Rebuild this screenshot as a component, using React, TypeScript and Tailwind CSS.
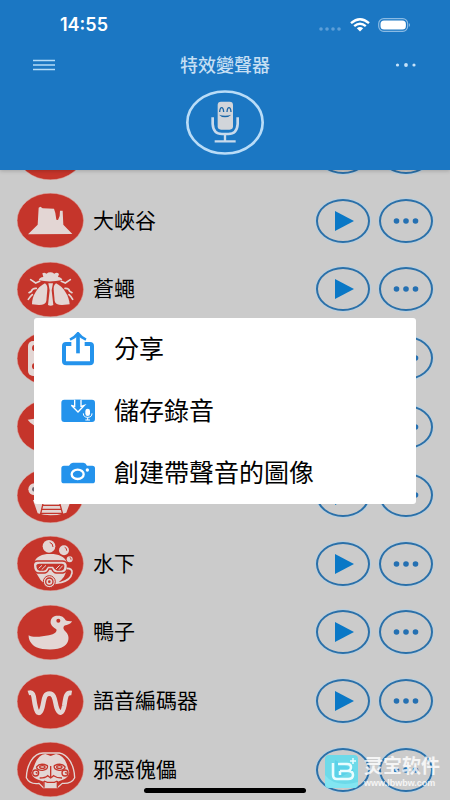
import type { ReactNode } from "react";

const PALE = "#e3d6d4";
const RED = "#c5352b";

function Badge({ children }: { children?: ReactNode }) {
  return (
    <svg viewBox="0 0 201 165" className="h-[55px] w-[67px] shrink-0" aria-hidden="true">
      <ellipse cx="100" cy="82.5" rx="99.500" ry="82" fill={RED} stroke="#dda8a2" strokeWidth="1.5" />
      {children}
    </svg>
  );
}

const canyon = (
  <path
    fill={PALE}
    d="M33 124L62 95L65 44L70 41L77 46L111 47L115 60L118 80L123 81L128 69L129 53L137 53L139 95L166 123Z"
  />
);

const fly = (
  <g fill={PALE} stroke={PALE} strokeLinecap="round">
    <path d="M76 34Q82 30 88 35Q100 27 112 35Q120 29 126 36L123 45Q134 46 136 54Q100 62 65 55Q67 46 79 45Z" stroke="none" />
    <path d="M84 64Q92 70 91 82L88 117Q86 129 66 129L45 127C44 105 60 75 84 64Z" stroke="none" />
    <path d="M117 64Q109 70 110 82L113 117Q115 129 135 129L158 127C157 105 141 75 117 64Z" stroke="none" />
    <path d="M94 64H108L104 85L109 129Q101 134 93 129L98 85Z" stroke="none" />
    <g fill="none" strokeWidth="5">
      <path d="M68 58L56 63L41 53" />
      <path d="M133 58L145 63L160 53" />
      <path d="M58 79Q46 78 43 88L36 92" />
      <path d="M144 79Q156 78 158 88L165 92" />
      <path d="M46 98Q39 104 34 112" />
      <path d="M156 98Q163 104 167 112" />
    </g>
  </g>
);

const domino = (
  <g>
    <rect x="33" y="30" width="134" height="105" rx="15" fill={PALE} />
    <circle cx="55" cy="51" r="10" fill={RED} />
    <circle cx="55" cy="106" r="10" fill={RED} />
  </g>
);

const plane = <path fill={PALE} d="M32 62L52 59L80 75V92L58 84L40 71Z" />;

const robot = (
  <g>
    <circle cx="52" cy="64" r="18" fill={PALE} />
    <circle cx="52" cy="64" r="7" fill="#6f6670" />
    <path d="M48 96L162 96L148 134Q102 149 62 136Z" fill={PALE} />
    <g fill="none" stroke={RED} strokeWidth="4">
      <path d="M76 112H130M73 124H134M70 136H138" />
      <path d="M80 98L70 142M126 98L138 142" />
    </g>
  </g>
);

const diver = (
  <g>
    <g fill={PALE}>
      <circle cx="96" cy="31" r="19" />
      <circle cx="141" cy="43" r="15" />
      <circle cx="158" cy="70" r="9" />
      <path d="M53 76C58 61 78 53 101 54C124 54 143 62 148 76L151 100L141 122Q123 147 98 148Q76 145 65 123L56 108Z" />
    </g>
    <g fill="none" stroke={RED} strokeWidth="3">
      <path d="M98 19Q108 22 108 33M143 34Q150 36 149 44M158 64Q163 66 162 71" />
    </g>
    <path d="M49 87Q49 75 62 75H136Q149 75 151 87Q153 108 138 111H118Q109 111 104 99H96Q91 111 82 111H62Q49 108 49 87Z" fill={PALE} stroke={RED} strokeWidth="4" />
    <path d="M58 88Q59 83 67 83H134Q143 83 142 91Q142 104 132 104H120Q113 102 108 92H93Q87 103 80 104H67Q58 102 58 88Z" fill={RED} />
    <path d="M65 97L75 88M74 101L87 88M117 99L128 88M126 101L137 89" stroke={PALE} strokeWidth="3" />
    <path d="M149 97Q167 97 165 111Q161 132 133 139L108 143" fill="none" stroke={PALE} strokeWidth="5" />
    <circle cx="97" cy="137" r="18" fill={PALE} stroke={RED} strokeWidth="3" />
    <circle cx="97" cy="137" r="11" fill="none" stroke={RED} strokeWidth="4" />
    <circle cx="97" cy="137" r="4" fill={RED} />
  </g>
);

const duck = (
  <g>
    <path
      fill={PALE}
      d="M35 91C45 98 72 96 96 91C113 88 121 80 118 73C109 67 99 60 101 48C103 36 113 31 124 32C136 32 143 39 146 46C152 50 160 48 165 49C163 56 152 60 142 62C137 67 139 74 147 81C158 92 158 112 141 124C122 137 80 136 58 127C43 119 34 105 35 91Z"
    />
    <circle cx="124" cy="47" r="6" fill={RED} />
  </g>
);

const wave = (
  <path
    d="M34 57C54 50 49 76 55 96C60 122 70 123 76 100C82 78 80 59 97 59C114 59 113 80 119 101C127 123 137 120 142 94C146 70 146 54 164 57"
    fill="none"
    stroke={PALE}
    strokeWidth="14"
    strokeLinecap="butt"
  />
);

const puppet = (
  <g>
    <path d="M28 107C29 68 50 33 78 33H127C153 37 172 70 173 107Q164 126 136 124L121 137H79L66 124Q38 128 28 107Z" fill={RED} stroke={PALE} strokeWidth="4" />
    <path d="M54 65Q65 38 85 36L101 42L117 36Q139 39 149 65L157 91Q155 105 141 112L122 119V136H80V119L60 112Q43 105 44 91Z" fill={PALE} />
    <g fill="none" stroke={RED} strokeWidth="4">
      <path d="M58 75Q70 61 91 71Q94 83 77 85Q62 86 58 75" />
      <path d="M145 75Q133 61 112 71Q109 83 126 85Q141 86 145 75" />
      <ellipse cx="76" cy="75" rx="8" ry="4" />
      <ellipse cx="127" cy="75" rx="8" ry="4" />
      <circle cx="56" cy="93" r="9" />
      <circle cx="144" cy="93" r="9" />
      <path d="M56 93q4-3 4 2M144 93q4-3 4 2" />
      <path d="M101 72V107M68 108Q85 108 92 101L101 108L110 101Q119 108 135 108M81 117V137M121 117V137M81 117L91 121H112L121 117" />
    </g>
  </g>
);

const rows: { label: string; art?: ReactNode }[] = [
  { label: "" },
  { label: "大峽谷", art: canyon },
  { label: "蒼蠅", art: fly },
  { label: "", art: domino },
  { label: "", art: plane },
  { label: "", art: robot },
  { label: "水下", art: diver },
  { label: "鴨子", art: duck },
  { label: "語音編碼器", art: wave },
  { label: "邪惡傀儡", art: puppet },
];

const roundButton =
  "flex h-11 w-[54px] shrink-0 items-center justify-center rounded-[50%] border-2 border-[#2a70a9] text-[#0a78c6] ring-1 ring-[#b5cfe2]";

function EffectRow({ label, art }: { label: string; art?: ReactNode }) {
  return (
    <li className="flex items-center pr-[17px] pl-[17px]">
      <Badge>{art}</Badge>
      <span className="ml-[9px] flex-1 pb-1 text-[21px] leading-7 text-black">{label}</span>
      <div className="flex gap-[9px]">
        <button type="button" className={roundButton}>
          <svg viewBox="0 0 22 22" className="h-[22px] w-[22px]" fill="currentColor" aria-hidden="true">
            <path d="M3 1L22 11L3 21Z" />
          </svg>
        </button>
        <button type="button" className={roundButton}>
          <svg viewBox="0 0 26 8" className="h-2 w-[26px]" fill="#2470b2" aria-hidden="true">
            <circle cx="3.500" cy="4" r="2.800" />
            <circle cx="13" cy="4" r="2.800" />
            <circle cx="22.500" cy="4" r="2.800" />
          </svg>
        </button>
      </div>
    </li>
  );
}

function Header() {
  return (
    <header className="relative z-10 shrink-0 bg-[#1b77c3] pb-[15px] shadow-[0_1px_4px_rgba(0,0,0,0.2)]">
      <div className="flex h-[50px] items-center justify-between pr-[39px] pl-[60px] text-white">
        <time className="font-[Inter,sans-serif] text-[18px] leading-6 font-semibold">14:55</time>
        <div className="flex items-center gap-2">
          <svg viewBox="0 0 24 14" className="h-[14px] w-6" fill="#5d9fd8" aria-hidden="true">
            <circle cx="3" cy="11" r="1.800" />
            <circle cx="9" cy="11" r="1.800" />
            <circle cx="15" cy="11" r="1.800" />
            <circle cx="21" cy="11" r="1.800" />
          </svg>
          <svg viewBox="0 0 20 14" className="h-[14px] w-5" fill="none" stroke="#fff" strokeWidth="2.400" aria-hidden="true">
            <path d="M1 5.200Q10-2.600 19 5.200" />
            <path d="M4.200 8.200Q10 3.200 15.800 8.200" />
            <path d="M6.800 10.300Q10 7.700 13.200 10.300L10 13.500Z" fill="#fff" stroke="none" />
          </svg>
          <svg viewBox="0 0 33 14" className="h-[14px] w-[33px]" aria-hidden="true">
            <rect x="0.700" y="0.700" width="29" height="12.600" rx="5" fill="none" stroke="#8bbbe4" strokeWidth="1.200" />
            <rect x="2.500" y="2.500" width="25.400" height="9" rx="3.500" fill="#fff" />
            <path d="M31 5Q33 7 31 9Z" fill="#8bbbe4" />
          </svg>
        </div>
      </div>
      <div className="flex h-[30px] items-center justify-between px-8">
        <button type="button" aria-label="Menu" className="flex h-6 w-6 items-center justify-center">
          <svg viewBox="0 0 24 12" className="h-3 w-6" stroke="#b4dcf8" strokeWidth="1.400" aria-hidden="true">
            <path d="M1 1.500H23M1 6H23M1 10.500H23" />
          </svg>
        </button>
        <h1 className="pb-[2px] text-[18px] leading-6 font-medium text-[#c6dff3]">特效變聲器</h1>
        <button type="button" aria-label="More" className="flex h-6 w-6 items-center justify-center">
          <svg viewBox="0 0 24 6" className="h-[6px] w-6" fill="#c6e2f8" aria-hidden="true">
            <circle cx="3.500" cy="3" r="1.600" />
            <circle cx="12" cy="3" r="1.900" />
            <circle cx="20" cy="3" r="1.600" />
          </svg>
        </button>
      </div>
      <div className="mt-[10px] flex justify-center">
        <button type="button" aria-label="Record" className="h-[65px] w-[78px]">
          <svg viewBox="558 270 234 195" className="h-full w-full" aria-hidden="true">
            <ellipse cx="675" cy="367.500" rx="113" ry="93" fill="none" stroke="#b9dcf7" strokeWidth="8" />
            <rect x="653" y="305" width="46" height="84" rx="10" fill="#d2d5da" />
            <path d="M659 336Q660 323 665 323Q670 323 671 336M681 336Q682 323 687 323Q692 323 693 336" fill="none" stroke="#1b67a8" strokeWidth="4" />
            <path d="M657 344Q675 350 694 344Q686 352 675 352Q664 352 657 344Z" fill="#1b67a8" />
            <path d="M638 352V372Q640 402 666 402H685Q711 402 713 372V352" fill="none" stroke="#c8daec" strokeWidth="8" />
            <path d="M675 402V423M644 424H707" fill="none" stroke="#c8daec" strokeWidth="7" />
          </svg>
        </button>
      </div>
    </header>
  );
}

const actions: { label: string; icon: ReactNode }[] = [
  {
    label: "分享",
    icon: (
      <svg viewBox="182 66 102 102" className="h-[34px] w-[34px]" fill="none" stroke="#2493ec" aria-hidden="true">
        <path d="M213 102H197Q191 102 191 108V153Q191 160 198 160H268Q275 160 275 153V108Q275 102 269 102H253" strokeWidth="12" />
        <path d="M233 130V74" strokeWidth="11" />
        <path d="M209 89Q224 82 233 70Q242 82 257 89" strokeWidth="8" />
      </svg>
    ),
  },
  {
    label: "儲存錄音",
    icon: (
      <svg viewBox="182 252 102 102" className="h-[34px] w-[34px]" aria-hidden="true">
        <rect x="183" y="269" width="101" height="67" rx="9" fill="#2493ec" />
        <path d="M223 269V289L213 286L233 306L252 286L242 289V269" fill="#2493ec" stroke="#fff" strokeWidth="4" />
        <rect x="255" y="296" width="14" height="22" rx="7" fill="#fff" />
        <path d="M249 310Q249 322 262 322Q275 322 275 310M262 322V330M255 330H269" fill="none" stroke="#fff" strokeWidth="3" />
      </svg>
    ),
  },
  {
    label: "創建帶聲音的圖像",
    icon: (
      <svg viewBox="182 437 102 102" className="h-[34px] w-[34px]" aria-hidden="true">
        <path d="M183 474Q183 466 191 466H206Q211 457 218 457H249Q256 457 260 466H276Q284 466 284 474V511Q284 519 276 519H191Q183 519 183 511Z" fill="#2493ec" />
        <ellipse cx="232" cy="492" rx="18" ry="14" fill="#2493ec" stroke="#fff" strokeWidth="7" />
        <circle cx="261" cy="479" r="5" fill="#fff" />
      </svg>
    ),
  },
];

function ActionDialog() {
  return (
    <div
      role="dialog"
      aria-modal="true"
      className="absolute inset-x-[34px] top-[318px] z-20 rounded-[3px] bg-white"
    >
      {actions.map((action) => (
        <button
          key={action.label}
          type="button"
          className="flex h-[62px] w-full items-center gap-[19px] pl-[27px] text-left text-[25px] leading-8 text-black"
        >
          {action.icon}
          <span className="pb-1">{action.label}</span>
        </button>
      ))}
    </div>
  );
}

function Watermark() {
  return (
    <div className="absolute right-[10px] bottom-[11px] z-20 flex items-center gap-[6px] text-white/80">
      <svg viewBox="0 0 33 33" className="h-[33px] w-[33px]" aria-hidden="true">
        <rect width="33" height="33" rx="4" fill="#63dcec" fillOpacity="0.9" />
        <path d="M0 20Q10 33 33 27V29Q33 33 29 33H4Q0 33 0 29Z" fill="#8beaf4" fillOpacity="0.7" />
        <path d="M8 8V20Q8 24 12 24H23Q28 24 28 20Q28 16 23 16H15M13 9H22Q26 9 26 12Q26 16 22 16M15 16V20" fill="none" stroke="#e9fdff" strokeWidth="2.500" />
        <path d="M28 3V9M25 6H31" stroke="#e9fdff" strokeWidth="1.500" />
      </svg>
      <div className="w-[76px]">
        <p className="text-[19px] leading-6 font-bold whitespace-nowrap">灵宝软件</p>
        <p className="font-['Liberation_Sans',sans-serif] text-[9px] leading-3 font-bold whitespace-nowrap">www.lbwbw.com</p>
      </div>
    </div>
  );
}

export default function App() {
  return (
    <div className="relative flex h-screen flex-col overflow-hidden bg-[#cbcbcb] font-['Noto_Sans_CJK_TC','Noto_Sans_CJK_SC',sans-serif]">
      <Header />
      <main className="min-h-0 flex-1 overflow-hidden">
        <ul className="-mt-[52px] grid h-[686px] grid-rows-10">
          {rows.map((row, i) => (
            <EffectRow key={i} label={row.label} art={row.art} />
          ))}
        </ul>
      </main>
      <ActionDialog />
      <Watermark />
      <div className="absolute bottom-[7px] left-1/2 z-20 h-[5px] w-[162px] -translate-x-1/2 rounded-full bg-black" />
    </div>
  );
}
